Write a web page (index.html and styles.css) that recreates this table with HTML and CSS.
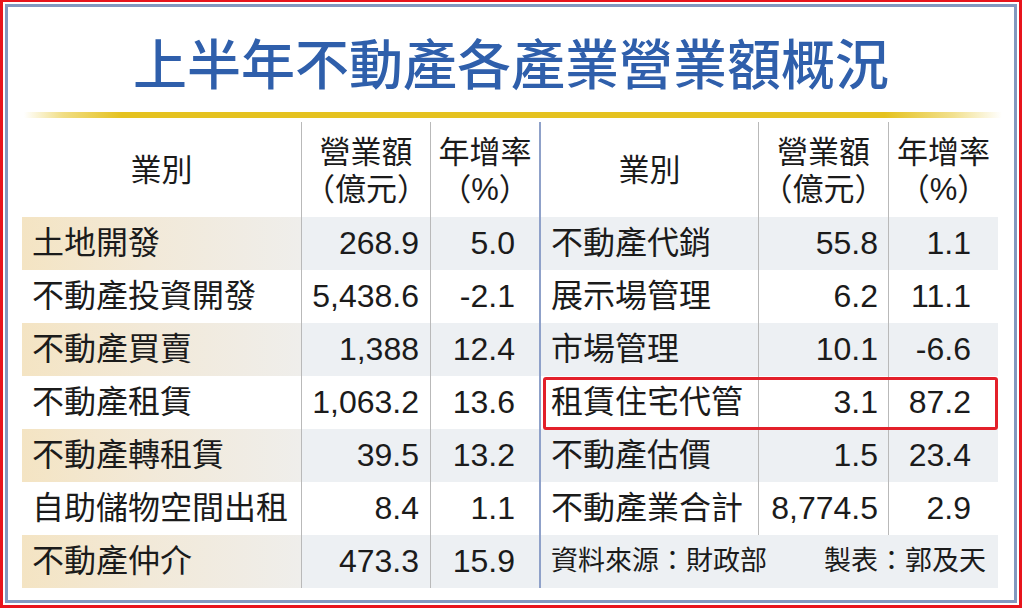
FILE: index.html
```html
<!DOCTYPE html>
<html lang="zh-Hant">
<head>
<meta charset="utf-8">
<title>上半年不動產各產業營業額概況</title>
<link rel="stylesheet" href="styles.css">
</head>
<body>
<div class="frame">
  <div class="panel">
    <h1 class="title">上半年不動產各產業營業額概況</h1>
    <div class="rule"></div>
    <div class="tables">
      <div class="grid left">
        <div class="c head">業別</div>
        <div class="c head line"><span>營業額</span><span>（億元）</span></div>
        <div class="c head line"><span>年增率</span><span>（%）</span></div>

        <div class="c name beige">土地開發</div>
        <div class="c num n1 line shade">268.9</div>
        <div class="c num n2 line shade">5.0</div>

        <div class="c name">不動產投資開發</div>
        <div class="c num n1 line">5,438.6</div>
        <div class="c num n2 line">-2.1</div>

        <div class="c name beige">不動產買賣</div>
        <div class="c num n1 line shade">1,388</div>
        <div class="c num n2 line shade">12.4</div>

        <div class="c name">不動產租賃</div>
        <div class="c num n1 line">1,063.2</div>
        <div class="c num n2 line">13.6</div>

        <div class="c name beige">不動產轉租賃</div>
        <div class="c num n1 line shade">39.5</div>
        <div class="c num n2 line shade">13.2</div>

        <div class="c name">自助儲物空間出租</div>
        <div class="c num n1 line">8.4</div>
        <div class="c num n2 line">1.1</div>

        <div class="c name beige">不動產仲介</div>
        <div class="c num n1 line shade">473.3</div>
        <div class="c num n2 line shade">15.9</div>
      </div>

      <div class="grid right">
        <div class="c head">業別</div>
        <div class="c head line"><span>營業額</span><span>（億元）</span></div>
        <div class="c head line"><span>年增率</span><span>（%）</span></div>

        <div class="c name shade">不動產代銷</div>
        <div class="c num r1 line shade">55.8</div>
        <div class="c num r2 line shade">1.1</div>

        <div class="c name">展示場管理</div>
        <div class="c num r1 line">6.2</div>
        <div class="c num r2 line">11.1</div>

        <div class="c name shade">市場管理</div>
        <div class="c num r1 line shade">10.1</div>
        <div class="c num r2 line shade">-6.6</div>

        <div class="c name hl-a">租賃住宅代管</div>
        <div class="c num r1 line hl-b">3.1</div>
        <div class="c num r2 line hl-c">87.2</div>
        <div class="highlight"></div>

        <div class="c name shade">不動產估價</div>
        <div class="c num r1 line shade">1.5</div>
        <div class="c num r2 line shade">23.4</div>

        <div class="c name">不動產業合計</div>
        <div class="c num r1 line">8,774.5</div>
        <div class="c num r2 line">2.9</div>

        <div class="c foot shade"><span>資料來源：財政部</span><span>製表：郭及天</span></div>
      </div>
    </div>
  </div>
</div>
</body>
</html>
```

FILE: styles.css
```css
* { box-sizing: border-box; }

html, body {
  margin: 0;
  padding: 0;
  background: #ffffff;
}

body {
  font-family: "Liberation Sans", "Noto Sans CJK TC", sans-serif;
  color: #1b1b1b;
}

.frame {
  width: 1022px;
  height: 608px;
  border: 3px solid #e8141c;
  border-top-width: 2px;
  padding: 2px;
  background: #ffffff;
}

.panel {
  height: 100%;
  border: 3px solid #8398bf;
  padding: 0 0 0 14px;
  background: #ffffff;
}

.title {
  margin: 0;
  padding-top: 23px;
  height: 87px;
  font-family: "Noto Sans CJK TC", sans-serif;
  font-size: 54px;
  line-height: 64px;
  font-weight: 500;
  color: #2f5fab;
  text-align: center;
  padding-right: 14px;
}

.rule {
  margin: 18px 0 0 2px;
  width: 978px;
  height: 6px;
  background: linear-gradient(90deg,
    rgba(229, 194, 31, 0) 0%,
    rgba(229, 194, 31, 0.55) 4%,
    #e5c21f 10%,
    #e5c21f 88%,
    rgba(229, 194, 31, 0.5) 95%,
    rgba(229, 194, 31, 0) 100%);
}

.tables {
  display: flex;
  margin-top: 4px;
}

.grid {
  display: grid;
  grid-template-rows: 95px repeat(7, 53px);
}

.left {
  grid-template-columns: 279px 129px 109px;
}

.right {
  grid-template-columns: 217px 130px 110px;
  border-left: 2px solid #8fa1c9;
}

.c {
  display: flex;
  align-items: center;
  font-size: 32px;
  line-height: 53px;
  white-space: nowrap;
}

.head {
  flex-direction: column;
  justify-content: center;
  font-size: 31px;
  line-height: 37px;
  padding-top: 2px;
}

.line {
  border-left: 1px solid #b9b9b9;
}

.name {
  padding-left: 10px;
}

.num {
  justify-content: flex-end;
}

.n1 { padding-right: 11px; }
.n2 { padding-right: 24px; }
.r1 { padding-right: 10px; }
.r2 { padding-right: 27px; }

.shade {
  background: #edf0f3;
}

.beige {
  background: linear-gradient(90deg, #f4e4c3 0%, #f2e9d8 45%, #efeeeb 100%);
}

.hl-a { grid-area: 5 / 1; }
.hl-b { grid-area: 5 / 2; }
.hl-c { grid-area: 5 / 3; }

.highlight {
  grid-area: 5 / 1 / 6 / 4;
  margin: 1px 0 -1px 2px;
  border: 3px solid #e3202a;
  border-radius: 3px;
  z-index: 1;
}

.foot {
  grid-column: 1 / -1;
  justify-content: space-between;
  font-size: 27px;
  padding: 0 12px 0 10px;
}
```
